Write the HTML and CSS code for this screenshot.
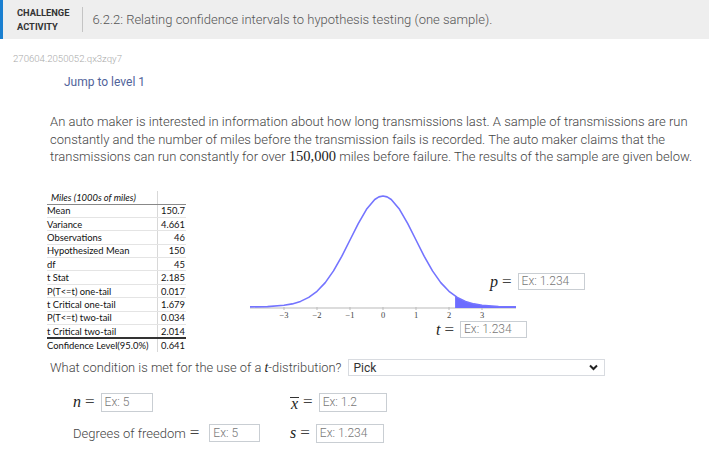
FILE: index.html
```html
<!DOCTYPE html>
<html>
<head>
<meta charset="utf-8">
<link rel="stylesheet" href="styles.css">
</head>
<body>
<header class="hdr">
  <div class="tag">CHALLENGE<br>ACTIVITY</div>
  <div class="sep"></div>
  <h1 class="title">6.2.2: Relating confidence intervals to hypothesis testing (one sample).</h1>
</header>
<main class="content">
  <div class="code">270604.2050052.qx3zqy7</div>
  <div class="jump">Jump to level 1</div>
  <p class="prompt">An auto maker is interested in information about how long transmissions last. A sample of transmissions are run constantly and the number of miles before the transmission fails is recorded. The auto maker claims that the transmissions can run constantly for over <span class="num">150,000</span> miles before failure. The results of the sample are given below.</p>

  <div class="figure">
    <table class="stats">
      <thead><tr><th class="cap">Miles (1000s of miles)</th><th></th></tr></thead>
      <tbody>
        <tr><td>Mean</td><td>150.7</td></tr>
        <tr><td>Variance</td><td>4.661</td></tr>
        <tr><td>Observations</td><td>46</td></tr>
        <tr><td>Hypothesized Mean</td><td>150</td></tr>
        <tr><td>df</td><td>45</td></tr>
        <tr><td>t Stat</td><td>2.185</td></tr>
        <tr><td>P(T&lt;=t) one-tail</td><td>0.017</td></tr>
        <tr><td>t Critical one-tail</td><td>1.679</td></tr>
        <tr><td>P(T&lt;=t) two-tail</td><td>0.034</td></tr>
        <tr><td>t Critical two-tail</td><td>2.014</td></tr>
        <tr class="conf"><td>Confidence Level(95.0%)</td><td>0.641</td></tr>
      </tbody>
    </table>

    <div class="chart">
      <svg class="plot" width="280" height="132" viewBox="245 190 280 132">
        <line x1="250" y1="307" x2="516" y2="307" stroke="#dcdcdc" stroke-width="2"/>
        <g stroke="#bbb" stroke-width="1">
          <line x1="284" y1="306" x2="284" y2="309"/>
          <line x1="317" y1="306" x2="317" y2="309"/>
          <line x1="350" y1="306" x2="350" y2="309"/>
          <line x1="383" y1="306" x2="383" y2="309"/>
          <line x1="416" y1="306" x2="416" y2="309"/>
          <line x1="449" y1="306" x2="449" y2="309"/>
          <line x1="482" y1="306" x2="482" y2="309"/>
        </g>
        <polygon fill="#6c6cff" points="455.1,295.1 457.25,296.4 465.5,300.4 473.75,302.9 482,304.3 498.5,305.6 516,305.9 516,307 455.1,307"/>
        <polyline fill="none" stroke="#7474ff" stroke-width="1.6" stroke-linejoin="round"
          points="250,305.9 267.5,305.6 284,304.3 292.25,302.9 300.5,300.4 308.75,296.4 317,290.3 325.25,281.6 333.5,269.9 341.75,255.4 350,239 358.25,222.6 366.5,208.3 374.75,198.5 378.9,195.9 383,195 387.1,195.9 391.25,198.5 399.5,208.3 407.75,222.6 416,239 424.25,255.4 432.5,269.9 440.75,281.6 449,290.3 457.25,296.4 465.5,300.4 473.75,302.9 482,304.3 498.5,305.6 516,305.9"/>
        <g font-family="Liberation Serif, serif" font-size="8.5" fill="#444" text-anchor="middle">
          <text x="284" y="317">−3</text>
          <text x="317" y="317">−2</text>
          <text x="350" y="317">−1</text>
          <text x="383" y="317">0</text>
          <text x="416" y="317">1</text>
          <text x="449" y="317">2</text>
          <text x="482" y="317">3</text>
        </g>
      </svg>
      <div class="eq pval"><span class="mi">p</span><span class="mo">=</span><span class="inp w67">Ex: 1.234</span></div>
      <div class="eq tval"><span class="mi">t</span><span class="mo">=</span><span class="inp w67">Ex: 1.234</span></div>
    </div>
  </div>

  <div class="question">
    <span>What condition is met for the use of a <span class="mi small">t</span>-distribution?</span>
    <div class="select"><span>Pick</span>
      <svg width="9" height="7" viewBox="0 0 9 7"><path d="M1 1.5 L4.5 5 L8 1.5" fill="none" stroke="#222" stroke-width="2"/></svg>
    </div>
  </div>

  <div class="answers">
    <div class="eq"><span class="mi">n</span><span class="mo">=</span><span class="inp w52">Ex: 5</span></div>
    <div class="eq"><span class="mi xbar">x</span><span class="mo">=</span><span class="inp w68">Ex: 1.2</span></div>
    <div class="eq"><span class="txt">Degrees of freedom</span><span class="mo">=</span><span class="inp w51 ml">Ex: 5</span></div>
    <div class="eq"><span class="mi">s</span><span class="mo">=</span><span class="inp w68">Ex: 1.234</span></div>
  </div>
</main>
</body>
</html>
```

FILE: styles.css
```css
html, body {
  margin: 0;
  padding: 0;
  background: #fff;
}
body {
  font-family: Roboto, "Liberation Sans", sans-serif;
  color: #444;
  width: 709px;
  height: 464px;
  overflow: hidden;
}

.hdr {
  display: flex;
  align-items: center;
  height: 39px;
  background: #eeeeee;
  border-left: 3px solid #1a7fd0;
  box-sizing: border-box;
}
.tag {
  margin-left: 14px;
  font-size: 9.3px;
  font-weight: 700;
  line-height: 14px;
  color: #333;
}
.sep {
  width: 1px;
  height: 25px;
  background: #c4c4c4;
  margin-left: 13px;
}
.title {
  margin: 0 0 0 9px;
  font-size: 13px;
  font-weight: 300;
  color: #555;
}

.content {
  display: flex;
  flex-direction: column;
}
.code {
  margin: 14px 0 0 13px;
  font-size: 9.6px;
  line-height: 12px;
  color: #aaa;
  font-weight: 300;
}
.jump {
  margin: 9px 0 0 64px;
  font-size: 12px;
  line-height: 16px;
  color: #51639a;
}
.prompt {
  margin: 23px 0 0 50px;
  width: 648px;
  font-size: 13px;
  font-weight: 300;
  line-height: 17.5px;
  color: #444;
}
.num {
  font-family: "Liberation Serif", "DejaVu Serif", serif;
  font-size: 14.5px;
  font-weight: 400;
  line-height: 1;
  color: #222;
}

.figure {
  display: flex;
  margin: 25px 0 0 47px;
  height: 162px;
}
.stats {
  flex: 0 0 139px;
  width: 139px;
  table-layout: fixed;
  border-collapse: collapse;
  font-family: Lato, "Open Sans", sans-serif;
  font-size: 9.4px;
  color: #111;
  align-self: flex-start;
}
.stats th, .stats td {
  padding: 0;
  height: 12.4px;
  line-height: 11px;
  border-bottom: 1px solid #e4e4e4;
  white-space: nowrap;
}
.stats th {
  height: 13px;
  font-weight: 400;
  border-bottom: 1px solid #888;
}
.stats td:first-child, .stats th:first-child {
  width: 106px;
  text-align: left;
  border-right: 1px solid #d8d8d8;
}
.stats th.cap {
  font-style: italic;
  text-align: left;
  padding-left: 4px;
}
.stats td:last-child, .stats th:last-child {
  text-align: right;
  padding-right: 1px;
}
.stats tr.conf td {
  border-top: 2px solid #333;
  border-bottom: none;
}

.chart {
  position: relative;
  flex: 0 0 420px;
  height: 160px;
}
.plot {
  display: block;
  margin-left: 59px;
}
.eq {
  display: flex;
  align-items: center;
}
.chart .eq {
  position: absolute;
}
.pval { left: 304px; top: 82px; }
.tval { left: 250px; top: 130px; }

.mi {
  font-family: "Liberation Serif", "DejaVu Serif", serif;
  font-style: italic;
  font-size: 16px;
  color: #222;
  line-height: 18px;
}
.mi.small { font-size: 14px; }
.xbar {
  display: inline-block;
  line-height: 11px;
  border-top: 1px solid #333;
  padding: 0 1px;
  margin-top: 1px;
}
.mo {
  font-family: "Liberation Serif", "DejaVu Serif", serif;
  font-size: 17px;
  color: #444;
  margin: 0 6px 0 4px;
  line-height: 18px;
}
.inp {
  display: inline-block;
  box-sizing: border-box;
  height: 17px;
  border: 1px solid #c9ced3;
  padding: 0 3px;
  font-size: 12px;
  line-height: 15px;
  font-weight: 300;
  color: #777;
  background: #fff;
}
.w67 { width: 67px; }
.w52 { width: 52px; }
.w68 { width: 68px; height: 19px; line-height: 17px; }
.w51 { width: 51px; height: 18px; line-height: 16px; }
.answers .w52 { height: 19px; line-height: 17px; }
.ml { margin-left: 4px; }

.question {
  display: flex;
  align-items: center;
  margin: 6px 0 0 50px;
  font-size: 12.9px;
  font-weight: 300;
  color: #444;
  height: 18px;
}
.select {
  display: flex;
  align-items: center;
  justify-content: space-between;
  box-sizing: border-box;
  width: 257px;
  height: 17px;
  margin-left: 7px;
  padding: 0 6px 0 4px;
  border: 1px solid #d8dbe0;
  font-size: 12px;
  font-weight: 400;
  color: #333;
}

.answers {
  display: grid;
  grid-template-columns: 217px auto;
  row-gap: 12px;
  margin: 16px 0 0 73px;
}
.txt {
  font-size: 13px;
  font-weight: 300;
  color: #444;
}
```
